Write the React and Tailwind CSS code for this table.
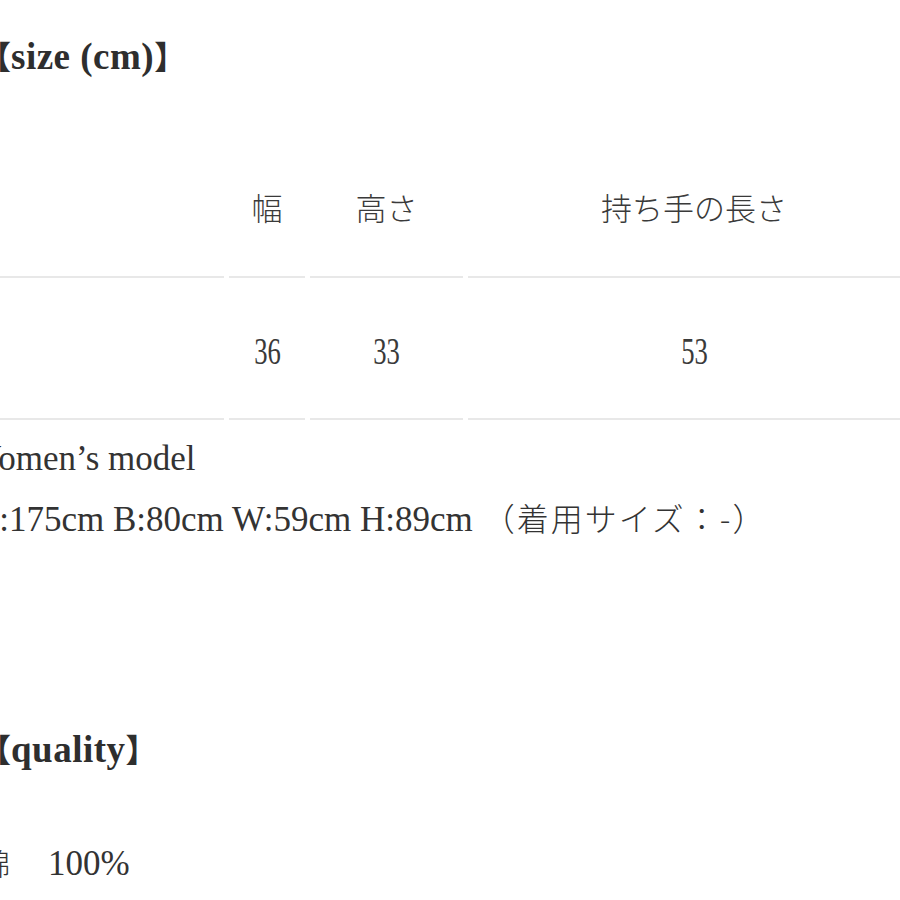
import React from 'react';

const serif = "font-['Liberation_Serif','Noto_Sans_CJK_JP',serif]";
const jp = "font-['Noto_Sans_CJK_JP',sans-serif]";

function Heading({ children }) {
  return (
    <h2 className={`${serif} text-[37px] font-bold leading-[50px] text-[#2e2e2e] whitespace-nowrap`}>
      <span className={`${jp} text-[32px] font-bold`}>【</span>
      <span className="tracking-[0.5px]">{children}</span>
      <span className={`${jp} text-[32px] font-bold`}>】</span>
    </h2>
  );
}

const cols = ['幅', '高さ', '持ち手の長さ'];
const values = ['36', '33', '53'];

function Cell({ children, className = '' }) {
  return (
    <div className={`h-[140px] border-b-2 border-[#e8e8e8] flex items-center justify-center ${className}`}>
      {children}
    </div>
  );
}

export default function App() {
  return (
    <main className="w-[900px] h-[900px] overflow-hidden bg-white text-[#333]">
      <div className="ml-[-26px] pt-[30px]">
        {/* size heading */}
        <div className="ml-[5px]">
          <Heading>size (cm)</Heading>
        </div>

        {/* size table */}
        <div className="mt-[56px] grid grid-cols-[250px_76px_153px_452px] gap-x-[5px] gap-y-[2px]">
          <Cell />
          {cols.map((c) => (
            <Cell key={c}>
              <span className={`${jp} text-[31px] font-light text-[#3a3a3a]`}>{c}</span>
            </Cell>
          ))}
          <Cell />
          {values.map((v, i) => (
            <Cell key={i} className="pt-[6px]">
              <span className={`${serif} text-[37px] text-[#3a3a3a] scale-x-[0.72] inline-block`}>{v}</span>
            </Cell>
          ))}
        </div>

        {/* model info */}
        <div className={`${serif} mt-[10px] text-[35px] leading-[58px] text-[#333] whitespace-nowrap`}>
          <p className="ml-[-6px]">Women’s model</p>
          <p>
            H:175cm B:80cm W:59cm H:89cm
            <span className={`${jp} text-[32px] font-light ml-[10px] tracking-[2px]`}>（着用サイズ：-）</span>
          </p>
        </div>

        {/* quality */}
        <div className="mt-[174px] ml-[5px]">
          <Heading>quality</Heading>
        </div>
        <p className={`${serif} mt-[58px] text-[35px] leading-[58px] whitespace-nowrap`}>
          <span className={`${jp} text-[30px] font-light ml-[6px]`}>綿</span>
          <span className={`${jp} text-[30px] mr-[8px]`}>　</span>
          100%
        </p>
      </div>
    </main>
  );
}
